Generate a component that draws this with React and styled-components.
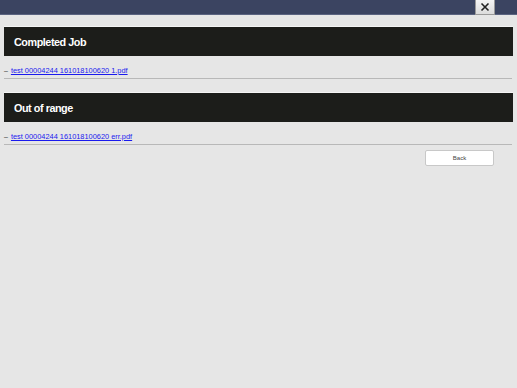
import React from "react";
import styled, { createGlobalStyle } from "styled-components";

const Global = createGlobalStyle`
  html, body { margin: 0; padding: 0; }
  body {
    background: #e6e6e6;
    font-family: "Liberation Sans", Arial, sans-serif;
    width: 517px;
    height: 388px;
    overflow: hidden;
  }
`;

const Page = styled.div`
  width: 517px;
  height: 388px;
  display: flex;
  flex-direction: column;
  background: #e6e6e6;
`;

const TopBar = styled.div`
  height: 15px;
  flex-shrink: 0;
  background: #3b4461;
  display: flex;
  justify-content: flex-end;
  padding-right: 22px;
  box-sizing: border-box;
  border-bottom: 1px solid #5a6380;
`;

const CloseButton = styled.button`
  width: 20px;
  height: 15px;
  margin: 0;
  padding: 0;
  border: 1px solid #9a9a9a;
  border-top: none;
  background: linear-gradient(#f4f4f4, #dcdcdc);
  display: flex;
  align-items: center;
  justify-content: center;
`;

const Content = styled.div`
  padding: 11px 4px 0 4px;
  display: flex;
  flex-direction: column;
`;

const SectionHeader = styled.div`
  height: 30px;
  flex-shrink: 0;
  box-sizing: border-box;
  background: #1c1d1a;
  border-top: 1px solid #f4f4f4;
  display: flex;
  align-items: center;
  padding-left: 10px;
  padding-top: 1px;
  color: #fff;
  font-weight: bold;
  font-size: 10.8px;
  letter-spacing: -0.45px;
`;

const FileRow = styled.div`
  display: flex;
  align-items: center;
  gap: 3px;
  height: 23px;
  flex-shrink: 0;
  box-sizing: border-box;
  padding-top: 6px;
  font-size: 7px;
  border-bottom: 1px solid #b8b8b8;
  margin-right: 1px;
  margin-bottom: ${(p) => p.$gap}px;
`;

const Dash = styled.span`
  color: #333;
  font-size: 7px;
`;

const FileLink = styled.a`
  color: #1a1aee;
  text-decoration: underline;
  font-size: 7.4px;
`;

const Footer = styled.div`
  display: flex;
  justify-content: flex-end;
  padding-right: 19px;
  padding-top: 5px;
`;

const BackButton = styled.button`
  width: 69px;
  height: 16px;
  background: #fff;
  border: 1px solid #c8c8c8;
  border-radius: 2px;
  font-family: "Liberation Sans", Arial, sans-serif;
  font-size: 6px;
  color: #444;
  padding: 0;
`;

export default function App() {
  return (
    <Page>
      <Global />
      <TopBar>
        <CloseButton aria-label="close">
          <svg width="10" height="10" viewBox="0 0 10 10">
            <path d="M1.5 1.5 L8.5 8.5 M8.5 1.5 L1.5 8.5" stroke="#222" strokeWidth="1.6" />
          </svg>
        </CloseButton>
      </TopBar>
      <Content>
        <SectionHeader>Completed Job</SectionHeader>
        <FileRow $gap={13}>
          <Dash>–</Dash>
          <FileLink href="#">test 00004244 161018100620 1.pdf</FileLink>
        </FileRow>
        <SectionHeader>Out of range</SectionHeader>
        <FileRow $gap={0}>
          <Dash>–</Dash>
          <FileLink href="#">test 00004244 161018100620 err.pdf</FileLink>
        </FileRow>
        <Footer>
          <BackButton>Back</BackButton>
        </Footer>
      </Content>
    </Page>
  );
}
